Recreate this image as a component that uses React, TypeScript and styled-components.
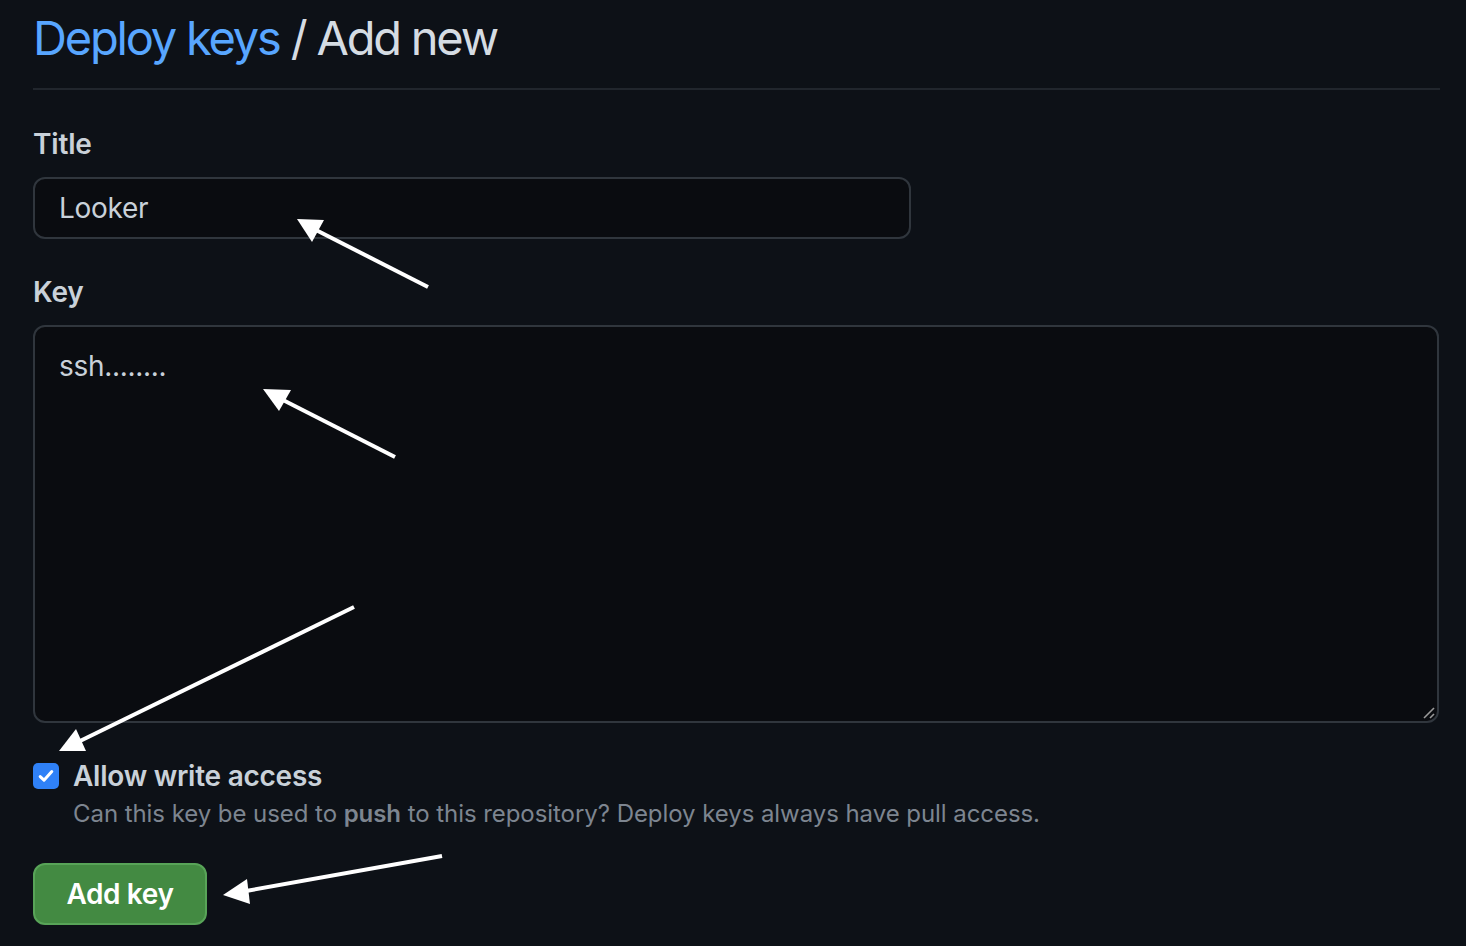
import React from "react";
import styled, { createGlobalStyle } from "styled-components";

const GlobalStyle = createGlobalStyle`
  html, body {
    margin: 0;
    padding: 0;
    background: #0d1117;
  }
  body {
    font-family: Inter, "Noto Sans", "Liberation Sans", sans-serif;
    color: #c9d1d9;
  }
  * { box-sizing: border-box; }
`;

const Page = styled.div`
  position: relative;
  width: 1466px;
  height: 946px;
  overflow: hidden;
  padding: 8px 26px 0 33px;
`;

const Header = styled.div`
  padding-bottom: 20px;
  border-bottom: 2px solid #21262d;
`;

const Heading = styled.h2`
  margin: 0;
  font-size: 47px;
  line-height: 60px;
  font-weight: 400;
  color: #d5dce3;
  letter-spacing: -2.2px;
`;

const Crumb = styled.a`
  color: #58a6ff;
  text-decoration: none;
`;

const Form = styled.form`
  display: flex;
  flex-direction: column;
  padding-top: 34px;
`;

const Group = styled.div`
  display: flex;
  flex-direction: column;
  margin-bottom: 33px;
`;

const Label = styled.label`
  font-size: 28px;
  line-height: 40px;
  font-weight: 600;
  color: #c9d1d9;
  margin-bottom: 13px;
  letter-spacing: -0.2px;
`;

const TextInput = styled.input`
  width: 878px;
  height: 62px;
  padding: 0 24px;
  font: inherit;
  font-size: 28px;
  color: #c9d1d9;
  background: #0a0c10;
  border: 2px solid #30363d;
  border-radius: 12px;
  outline: none;
  letter-spacing: -0.3px;
`;

const AreaWrap = styled.div`
  position: relative;
  width: 1406px;
  height: 398px;
`;

const TextArea = styled.textarea`
  display: block;
  width: 100%;
  height: 100%;
  padding: 19px 24px;
  font: inherit;
  font-size: 28px;
  line-height: 40px;
  color: #c9d1d9;
  background: #0a0c10;
  border: 2px solid #30363d;
  border-radius: 12px;
  outline: none;
  resize: none;
  letter-spacing: -0.3px;
`;

const Grip = styled.svg`
  position: absolute;
  right: 3px;
  bottom: 3px;
  pointer-events: none;
`;

const CheckRow = styled.div`
  display: flex;
  align-items: flex-start;
  gap: 14px;
  margin-top: 5px;
`;

const CheckBox = styled.span`
  flex: none;
  width: 26px;
  height: 26px;
  margin-top: 2px;
  border-radius: 5px;
  background: #2f81f7;
  display: flex;
  align-items: center;
  justify-content: center;
`;

const CheckText = styled.div`
  display: flex;
  flex-direction: column;
`;

const CheckTitle = styled.span`
  font-size: 28px;
  line-height: 30px;
  font-weight: 600;
  color: #c9d1d9;
  letter-spacing: -0.25px;
`;

const Note = styled.p`
  margin: 8px 0 0;
  font-size: 24px;
  line-height: 30px;
  color: #7d8590;
  letter-spacing: -0.06px;

  strong {
    font-weight: 600;
  }
`;

const Actions = styled.div`
  margin-top: 34px;
`;

const PrimaryButton = styled.button`
  width: 174px;
  height: 62px;
  font: inherit;
  font-size: 28px;
  font-weight: 600;
  color: #ffffff;
  background: #438a42;
  border: 2px solid #58a458;
  border-radius: 12px;
  cursor: pointer;
  letter-spacing: -0.4px;
`;

const Overlay = styled.svg`
  position: absolute;
  left: 0;
  top: 0;
  pointer-events: none;
`;

type Arrow = { x1: number; y1: number; tip: [number, number]; a: [number, number]; b: [number, number]; jx: number; jy: number };

const arrows: Arrow[] = [
  { x1: 428, y1: 287, jx: 314, jy: 229, tip: [297, 219], a: [312, 242], b: [324, 220] },
  { x1: 395, y1: 457, jx: 281, jy: 399, tip: [263, 389], a: [279, 411], b: [291, 390] },
  { x1: 354, y1: 607, jx: 78, jy: 742, tip: [59, 751], a: [76, 729], b: [86, 751] },
  { x1: 442, y1: 856, jx: 246, jy: 891, tip: [223, 895], a: [247, 879], b: [250, 904] },
];

export default function App() {
  return (
    <>
      <GlobalStyle />
      <Page>
        <Header>
          <Heading>
            <Crumb href="#">Deploy keys</Crumb> / Add new
          </Heading>
        </Header>
        <Form onSubmit={(e) => e.preventDefault()}>
          <Group>
            <Label htmlFor="title">Title</Label>
            <TextInput id="title" defaultValue="Looker" />
          </Group>
          <Group>
            <Label htmlFor="key">Key</Label>
            <AreaWrap>
              <TextArea id="key" defaultValue="ssh........" />
              <Grip width="14" height="14" viewBox="0 0 14 14">
                <line x1="2" y1="12" x2="12" y2="2" stroke="#9a9a9a" strokeWidth="1.6" />
                <line x1="8" y1="12" x2="12" y2="8" stroke="#9a9a9a" strokeWidth="1.6" />
              </Grip>
            </AreaWrap>
          </Group>
          <CheckRow>
            <CheckBox>
              <svg width="18" height="18" viewBox="0 0 18 18" fill="none">
                <polyline points="3.2,9.6 7,13.2 14.8,4.6" stroke="#ffffff" strokeWidth="3" strokeLinecap="round" strokeLinejoin="round" />
              </svg>
            </CheckBox>
            <CheckText>
              <CheckTitle>Allow write access</CheckTitle>
              <Note>
                Can this key be used to <strong>push</strong> to this repository? Deploy keys always have pull access.
              </Note>
            </CheckText>
          </CheckRow>
          <Actions>
            <PrimaryButton type="submit">Add key</PrimaryButton>
          </Actions>
        </Form>
        <Overlay width="1466" height="946" viewBox="0 0 1466 946">
          {arrows.map((ar, i) => (
            <g key={i}>
              <line x1={ar.x1} y1={ar.y1} x2={ar.jx} y2={ar.jy} stroke="#ffffff" strokeWidth="4" />
              <polygon points={`${ar.tip[0]},${ar.tip[1]} ${ar.a[0]},${ar.a[1]} ${ar.b[0]},${ar.b[1]}`} fill="#ffffff" />
            </g>
          ))}
        </Overlay>
      </Page>
    </>
  );
}
